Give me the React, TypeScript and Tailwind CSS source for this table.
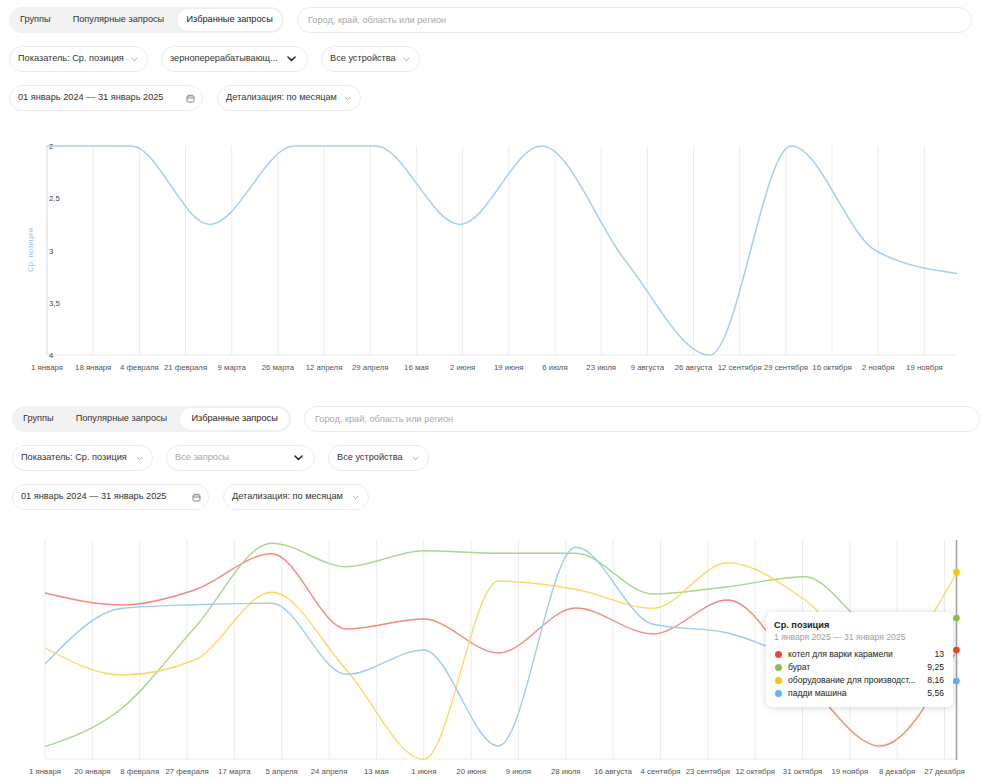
import React from "react";

type Pt = [number, number];

const MONTH_DAYS = [0, 31, 60, 91, 121, 152, 182, 213, 244, 274, 305, 335, 366];

const TOP_TICKS = [
  "1 января", "18 января", "4 февраля", "21 февраля", "9 марта", "26 марта", "12 апреля",
  "29 апреля", "16 мая", "2 июня", "19 июня", "6 июля", "23 июля", "9 августа",
  "26 августа", "12 сентября", "29 сентября", "16 октября", "2 ноября", "19 ноября",
];

const BOTTOM_TICKS = [
  "1 января", "20 января", "8 февраля", "27 февраля", "17 марта", "5 апреля", "24 апреля",
  "13 мая", "1 июня", "20 июня", "9 июля", "28 июля", "16 августа", "4 сентября",
  "23 сентября", "12 октября", "31 октября", "19 ноября", "8 декабря", "27 декабря",
];

// page-y values per month (1 Jan 2024 .. 1 Jan 2025)
const SERIES = [
  { name: "котел для варки карамели", value: "13", line: "#f5897c", dot: "#f44336",
    ys: [593, 605, 590, 553.7, 629, 619, 653, 608, 634, 600, 680, 746, 650] },
  { name: "бурат", value: "9,25", line: "#a9d68b", dot: "#8bc34a",
    ys: [746.7, 708, 628, 543.3, 566.7, 550.7, 553.3, 553.3, 594, 586.7, 576.7, 630, 618] },
  { name: "оборудование для производст...", value: "8,16", line: "#fdd765", dot: "#ffc107",
    ys: [648, 675, 660, 592.3, 670, 759.3, 581, 589.3, 608.3, 562.7, 600, 665, 572] },
  { name: "падди машина", value: "5,56", line: "#9dcbf2", dot: "#64b5f6",
    ys: [664, 608.3, 604.7, 603.3, 674.3, 650, 746, 547.3, 624.3, 633, 662, 692, 681] },
];


function monotone(pts: Pt[]): string {
  const n = pts.length;
  const s: number[] = [];
  for (let i = 0; i < n - 1; i++) s.push((pts[i + 1][1] - pts[i][1]) / (pts[i + 1][0] - pts[i][0]));
  const t: number[] = new Array(n).fill(0);
  for (let i = 1; i < n - 1; i++) {
    const h0 = pts[i][0] - pts[i - 1][0];
    const h1 = pts[i + 1][0] - pts[i][0];
    const s0 = s[i - 1];
    const s1 = s[i];
    const p = (s0 * h1 + s1 * h0) / (h0 + h1);
    t[i] = (Math.sign(s0) + Math.sign(s1)) * Math.min(Math.abs(s0), Math.abs(s1), 0.5 * Math.abs(p)) || 0;
  }
  t[0] = (3 * s[0] - t[1]) / 2;
  t[n - 1] = (3 * s[n - 2] - t[n - 2]) / 2;
  let d = `M${pts[0][0]},${pts[0][1]}`;
  for (let i = 0; i < n - 1; i++) {
    const dx = (pts[i + 1][0] - pts[i][0]) / 3;
    d += `C${pts[i][0] + dx},${pts[i][1] + dx * t[i]},${pts[i + 1][0] - dx},${pts[i + 1][1] - dx * t[i + 1]},${pts[i + 1][0]},${pts[i + 1][1]}`;
  }
  return d;
}


export default function App() {
  return (
    <div className="min-h-[780px] w-[981px] overflow-hidden bg-white font-['Liberation_Sans',Arial,sans-serif] text-[#333]">
      <Panel variant="top" />
      <Panel variant="bottom" />
    </div>
  );
}


function Panel({ variant }: { variant: "top" | "bottom" }) {
  const top = variant === "top";
  return (
    <div>
      <div className={top ? "space-y-[13px] pl-[9px] pr-[9px] pt-[7px]" : "space-y-[13px] pl-[12px] pr-[1px] pt-[11px]"}>
        <div className="flex items-center gap-[13px]">
          <Tabs wide={!top} />
          <input
            placeholder="Город, край, область или регион"
            className="h-[26px] flex-1 rounded-full border border-[#ececec] bg-white pl-[10px] text-[9.2px] outline-none placeholder:text-[#a8a8a8]"
          />
        </div>
        <div className="flex items-center gap-[13px]">
          <Select className={top ? "w-[139px]" : "w-[141px]"}>Показатель: Ср. позиция</Select>
          <Select className={top ? "w-[147px] pr-[11px]" : "w-[149px] pr-[11px]"} bold muted={!top}>
            {top ? "зерноперерабатывающ..." : "Все запросы"}
          </Select>
          <Select className={top ? "w-[99px]" : "w-[101px]"}>Все устройства</Select>
        </div>
        <div className="flex items-center gap-[14px]">
          <div
            className={`flex h-[26px] items-center justify-between rounded-full border border-[#ececec] pl-[8px] pr-[7px] text-[9.2px] ${
              top ? "w-[194px]" : "w-[197px]"
            }`}
          >
            <span>01 январь 2024 — 31 январь 2025</span>
            <CalendarIcon />
          </div>
          <Select className={top ? "w-[144px]" : "w-[146px]"}>Детализация: по месяцам</Select>
        </div>
      </div>
      {top ? <TopChart /> : <BottomChart />}
    </div>
  );
}


function Tabs({ wide }: { wide: boolean }) {
  return (
    <div className={`flex h-[26px] items-center gap-[4px] rounded-full bg-[#f2f2f2] p-[2px] text-[9.2px] ${wide ? "w-[279px]" : "w-[275px]"}`}>
      <span className="flex h-full items-center px-[9px]">Группы</span>
      <span className="flex h-full items-center px-[9px]">Популярные запросы</span>
      <span className="flex h-full flex-1 items-center justify-center rounded-full bg-white px-[9px] text-[#222] shadow-[0_0_2px_rgba(0,0,0,0.08)]">
        Избранные запросы
      </span>
    </div>
  );
}


function Select({
  className,
  bold,
  muted,
  children,
}: {
  className: string;
  bold?: boolean;
  muted?: boolean;
  children: React.ReactNode;
}) {
  return (
    <div
      className={`flex h-[26px] items-center justify-between rounded-full border border-[#ececec] bg-white pl-[8px] pr-[9px] text-[9.2px] ${className}`}
    >
      <span className={muted ? "text-[#a8a8a8]" : ""}>{children}</span>
      {bold ? (
        <svg width="9" height="6" viewBox="0 0 9 6">
          <path d="M1 1l3.5 3.5L8 1" fill="none" stroke="#222" strokeWidth="1.5" strokeLinecap="round" strokeLinejoin="round" />
        </svg>
      ) : (
        <svg width="7" height="5" viewBox="0 0 7 5">
          <path d="M1 1.2l2.5 2.5L6 1.2" fill="none" stroke="#9a9a9a" strokeWidth="0.9" strokeLinecap="round" strokeLinejoin="round" />
        </svg>
      )}
    </div>
  );
}


function CalendarIcon() {
  return (
    <svg width="9" height="9" viewBox="0 0 9 9">
      <rect x="1" y="1.8" width="7" height="6.2" rx="1.3" fill="none" stroke="#777" strokeWidth="0.9" />
      <line x1="1" y1="4" x2="8" y2="4" stroke="#777" strokeWidth="0.9" />
      <line x1="3" y1="0.6" x2="3" y2="2.4" stroke="#777" strokeWidth="0.9" />
      <line x1="6" y1="0.6" x2="6" y2="2.4" stroke="#777" strokeWidth="0.9" />
    </svg>
  );
}


function TopChart() {
  const off = 111;
  const k = 910 / 335;
  const x = (d: number) => 47 + d * k;
  const y = (v: number) => 146 + (v - 2) * 104.5 - off;
  const values = [2, 2, 2.75, 2, 2, 2.75, 2, 3.1, 4, 2, 3, 3.22];
  const pts: Pt[] = values.map((v, i) => [x(MONTH_DAYS[i]), y(v)]);

  return (
    <svg width="981" height="284" className="block">
      {TOP_TICKS.map((label, i) => {
        const tx = x(i * 17);
        return (
          <g key={label}>
            <line x1={tx} y1={146 - off} x2={tx} y2={355 - off} stroke="#ececec" strokeWidth="1" />
            <text x={tx} y={370 - off} fontSize="7.8" fill="#555" textAnchor="middle">{label}</text>
          </g>
        );
      })}
      <line x1={47} y1={146 - off} x2={47} y2={355 - off} stroke="#e2e2e2" strokeWidth="1" />
      <line x1={47} y1={355 - off} x2={957} y2={355 - off} stroke="#ececec" strokeWidth="1" />
      {["2", "2,5", "3", "3,5", "4"].map((l, i) => (
        <text key={l} x={49} y={y(2 + i * 0.5) + 3} fontSize="7.8" fill="#444">{l}</text>
      ))}
      <text
        x={0}
        y={0}
        fontSize="7.8"
        fill="#8fc3ee"
        textAnchor="middle"
        transform={`translate(33 ${250 - off}) rotate(-90)`}
      >
        Ср. позиция
      </text>
      <path d={monotone(pts)} fill="none" stroke="#a3cff3" strokeWidth="1.5" />
    </svg>
  );
}


function BottomChart() {
  const off = 510;
  const k = 912 / 366;
  const x = (d: number) => 45 + d * k;

  return (
    <div className="relative h-[270px]">
      <svg width="981" height="270" className="block">
        {BOTTOM_TICKS.map((label, i) => {
          const tx = x(i * 19);
          return (
            <g key={label}>
              <line x1={tx} y1={540 - off} x2={tx} y2={759 - off} stroke="#ececec" strokeWidth="1" />
              <text x={tx} y={774 - off} fontSize="7.8" fill="#555" textAnchor="middle">{label}</text>
            </g>
          );
        })}
        <line x1={45} y1={759 - off} x2={957} y2={759 - off} stroke="#ececec" strokeWidth="1" />
        {SERIES.map((s) => (
          <path
            key={s.name}
            d={monotone(s.ys.map((v, i) => [x(MONTH_DAYS[i]), v - off] as Pt))}
            fill="none"
            stroke={s.line}
            strokeWidth="1.4"
          />
        ))}
        <line x1={956.5} y1={540 - off} x2={956.5} y2={760 - off} stroke="#9e9e9e" strokeWidth="1.5" />
        {SERIES.map((s) => (
          <circle key={s.name} cx={956.5} cy={s.ys[12] - off} r="3.3" fill={s.dot} />
        ))}
      </svg>

      <div className="absolute left-[766px] top-[102px] h-[95px] w-[187px] rounded-[6px] bg-white pl-[8px] pr-[9px] pt-[8px] shadow-[0_1px_7px_rgba(0,0,0,0.16)]">
        <div className="text-[9.2px] font-bold leading-[11px] text-[#222]">Ср. позиция</div>
        <div className="text-[8.6px] leading-[12px] text-[#a0a0a0]">1 января 2025 — 31 января 2025</div>
        <div className="mt-[5px]">
          {SERIES.map((s) => (
            <div key={s.name} className="flex h-[13px] items-center text-[8.6px] text-[#222]">
              <span className="ml-[1px] mr-[6px] h-[7px] w-[7px] rounded-full" style={{ backgroundColor: s.dot }} />
              <span className="flex-1">{s.name}</span>
              <span>{s.value}</span>
            </div>
          ))}
        </div>
      </div>
    </div>
  );
}
